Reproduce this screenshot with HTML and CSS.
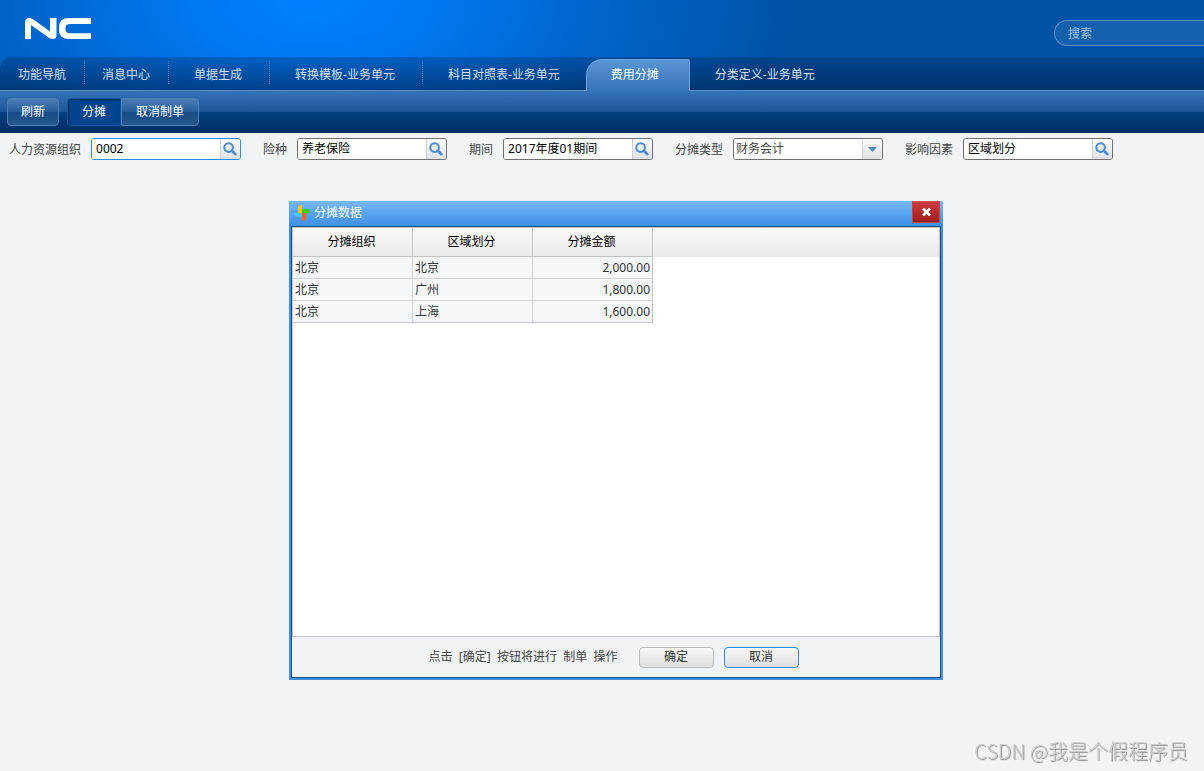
FILE: index.html
```html
<!DOCTYPE html>
<html lang="zh-CN">
<head>
<meta charset="utf-8">
<title>费用分摊</title>
<link rel="stylesheet" href="styles.css">
</head>
<body>
<svg class="defs" aria-hidden="true">
  <symbol id="lens" viewBox="0 0 14 14"><circle cx="5.6" cy="5.6" r="4.3" fill="none" stroke="#4a8ace" stroke-width="2"/><path d="M8.8 8.8 12.4 12.2" stroke="#4a8ace" stroke-width="2.6" stroke-linecap="round"/></symbol>
</svg>
<header class="header">
  <div class="brand">
    <svg class="logo" viewBox="0 0 66 22" role="img" aria-label="NC">
      <path d="M0 21V4.500Q0 0 4 0Q6.500 0 8.500 1.500L25 13.500V0H31.500V17Q31.500 21 28 21Q25.500 21 23.500 19.500L6 7V21Z" fill="#fff"/>
      <path d="M66 0H44Q34 0 34 9V12Q34 21 44 21H66V15.200H45Q40.500 15.200 40.500 11.500V9.500Q40.500 6 45 6H66Z" fill="#fff"/>
    </svg>
    <input class="search" type="search" placeholder="搜索" aria-label="搜索">
  </div>
  <nav class="tabs">
    <a class="tab tab-fixed" href="#">功能导航</a>
    <a class="tab tab-fixed" href="#">消息中心</a>
    <a class="tab" href="#">单据生成</a>
    <a class="tab" href="#">转换模板-业务单元</a>
    <a class="tab tab-last" href="#">科目对照表-业务单元</a>
    <a class="tab tab-active" href="#" aria-current="page">费用分摊</a>
    <a class="tab tab-last" href="#">分类定义-业务单元</a>
  </nav>
</header>
<div class="toolbar">
  <button class="tool" type="button">刷新</button>
  <div class="tool-group">
    <button class="tool tool-pressed" type="button">分摊</button>
    <button class="tool tool-end" type="button">取消制单</button>
  </div>
</div>
<main>
  <form class="filters">
    <div class="field"><label for="org">人力资源组织</label>
      <div class="control control-focus"><input id="org" value="0002"><button class="pick" type="button" aria-label="选择"><svg class="lens"><use href="#lens"/></svg></button></div></div>
    <div class="field"><label for="kind">险种</label>
      <div class="control"><input id="kind" value="养老保险"><button class="pick" type="button" aria-label="选择"><svg class="lens"><use href="#lens"/></svg></button></div></div>
    <div class="field"><label for="period">期间</label>
      <div class="control"><input id="period" value="2017年度01期间"><button class="pick" type="button" aria-label="选择"><svg class="lens"><use href="#lens"/></svg></button></div></div>
    <div class="field"><label for="type">分摊类型</label>
      <div class="control"><select id="type"><option>财务会计</option></select><span class="pick"><svg class="arrow" viewBox="0 0 9 5"><path d="M0 0H9L4.500 5Z" fill="#4a8ace"/></svg></span></div></div>
    <div class="field"><label for="factor">影响因素</label>
      <div class="control"><input id="factor" value="区域划分"><button class="pick" type="button" aria-label="选择"><svg class="lens"><use href="#lens"/></svg></button></div></div>
  </form>
</main>
<section class="dialog" role="dialog" aria-labelledby="dialog-title">
  <div class="titlebar">
    <svg class="mark" viewBox="0 0 16 16" aria-hidden="true">
      <path d="M4 8V4Q4 0 8 0V8Z" fill="#ffc800"/><path d="M8 4H13Q16 4 16 8H8Z" fill="#3ccc10"/><path d="M8 8H12V12Q12 16 8 16Z" fill="#ff6400"/><path d="M0 8H8V12H4Q0 12 0 8Z" fill="#48c4ff"/>
    </svg>
    <h1 class="title" id="dialog-title">分摊数据</h1>
    <button class="close" type="button" aria-label="关闭"><svg class="cross" viewBox="0 0 9 8"><path d="M1 0.500 8 7.500M8 0.500 1 7.500" stroke="#fff" stroke-width="2.600"/></svg></button>
  </div>
  <div class="panel">
    <div class="grid">
      <table class="data">
        <thead><tr><th>分摊组织</th><th>区域划分</th><th>分摊金额</th></tr></thead>
        <tbody>
          <tr><td>北京</td><td>北京</td><td class="num">2,000.00</td></tr>
          <tr><td>北京</td><td>广州</td><td class="num">1,800.00</td></tr>
          <tr><td>北京</td><td>上海</td><td class="num">1,600.00</td></tr>
        </tbody>
      </table>
    </div>
    <div class="actions">
      <p class="hint">点击  [确定]  按钮将进行  制单  操作</p>
      <button class="btn" type="button">确定</button>
      <button class="btn btn-focus" type="button">取消</button>
    </div>
  </div>
</section>
<div class="credit">CSDN @我是个假程序员</div>
</body>
</html>
```
FILE: styles.css
```css
* { box-sizing: border-box; }
body, input, button, select {
  font: 12px/20px "Noto Sans", "Noto Sans CJK SC", sans-serif;
}
body { margin: 0; min-height: 100vh; background: #f1f3f7; color: #444; }
button { padding: 0; }
.defs { position: absolute; width: 0; height: 0; }

.header { background: radial-gradient(ellipse 480px 260px at 310px 0, #0080ff 0%, #0078f0 25%, #0062c6 65%, #0052a5 100%); }
.brand { display: flex; justify-content: space-between; align-items: flex-start; height: 57px; padding: 18px 0 0 25px; }
.logo { width: 66px; height: 22px; }
.search {
  appearance: none; width: 150px; height: 26px; margin: 2px 0 0; padding: 0 13px;
  border: 1px solid #5a8fc6; border-right: 0; border-radius: 13px 0 0 13px;
  background: #1560ad; color: #fff; outline: none;
}
.search::placeholder { color: #a3c0de; opacity: 1; }

.tabs {
  display: flex; height: 34px; border-bottom: 1px solid #5a8fc6; border-top-left-radius: 12px;
  background: linear-gradient(rgba(0, 26, 64, .25), rgba(0, 26, 64, .55));
}
.tab {
  position: relative; padding: 0 27px 0 26px; line-height: 35px; color: #cfe0f2;
  text-decoration: none; white-space: nowrap;
}
.tab::after { content: ""; position: absolute; right: -1px; top: 4px; bottom: 6px; border-right: 1px dotted #3f78b5; }
.tab-fixed { padding: 0 18px; }
.tab-last { padding-right: 26px; }
.tab-last::after, .tab-active::after { display: none; }
.tab-active {
  height: 32px; margin-top: 2px; padding: 0 30px 0 24px; border: 1px solid #6ea3dc; border-bottom: 0;
  border-radius: 16px 3px 0 0; background: linear-gradient(#5a95d4, #3674b8); color: #fff; line-height: 30px;
}
.tab-active + .tab { padding-left: 25px; }

.toolbar {
  display: flex; gap: 8px; height: 42px; padding: 7px;
  background: linear-gradient(#3674b8 0, #1b5596 50%, #003f80 50%, #002f63 100%);
}
.tool-group { display: flex; }
.tool {
  height: 28px; padding: 0 13px; border: 1px solid #4c7fb4; border-radius: 4px; color: #fff;
  background: linear-gradient(#4a7fb8, #265c98 50%, #164a84 50%, #26588d);
}
.tool-pressed {
  padding: 0 14px; border-color: #0a55a8; border-radius: 4px 0 0 4px;
  background: #00458e; box-shadow: inset 1px 1px 2px #002a5c;
}
.tool-end { padding: 0 14px; border-radius: 0 4px 4px 0; }

.filters { display: flex; flex-wrap: wrap; gap: 6px 22px; padding: 5px 9px; }
.field { display: flex; align-items: center; gap: 10px; }
.field label { padding-top: 2px; }
.control {
  display: flex; width: 150px; height: 22px; border: 1px solid #707070; border-radius: 3px;
  background: #fff; overflow: hidden;
}
.control input, .control select {
  appearance: none; flex: 1; min-width: 0; height: 20px; margin: 0; padding: 0 0 0 4px; border: 0;
  background: #fff; color: #000; outline: none;
}
.control select { padding: 0 0 0 2px; color: #444; }
.control-focus { border-color: #2b8cf5; }
.control-focus input { padding: 0; border-left: 4px solid #fff6d8; }
.pick {
  display: flex; align-items: center; justify-content: center; width: 20px; border: 0;
  border-left: 1px solid #d0d0d0; background: linear-gradient(#fcfcfd, #dfe1e6);
}
.lens { width: 14px; height: 14px; margin-right: 1px; }
.arrow { width: 9px; height: 5px; }

.dialog { position: absolute; left: 289px; top: 201px; width: 654px; padding-bottom: 2px; background: #3d8fe6; }
.titlebar { display: flex; height: 25px; padding: 0 3px 0 5px; background: linear-gradient(#78b7f8, #3d8fe6); }
.mark { width: 16px; height: 16px; margin-top: 4px; }
.title { flex: 1; margin: 0; padding: 2px 4px; font-size: 12px; font-weight: 400; line-height: 20px; color: #fff; }
.close {
  display: flex; justify-content: center; align-items: center; width: 28px; height: 22px; padding-bottom: 1px;
  border: 1px solid #b84450; border-top-color: #d05050; border-radius: 0 0 2px 2px;
  background: linear-gradient(#cc3c40, #a01c20);
}
.cross { width: 9px; height: 8px; }
.panel { margin: 0 2px; border: 1px solid #1d4f8c; background: #f1f3f7; }
.grid {
  min-height: 410px; border: 1px solid #c3c3c3;
  background: linear-gradient(#fafafa, #e9e9e9) top / 100% 29px no-repeat #fff;
}
.data { border-collapse: separate; border-spacing: 0; table-layout: fixed; width: 360px; }
.data th {
  height: 29px; padding: 0 2px 0 0; border-right: 1px solid #c3c3c3; border-bottom: 1px solid #c3c3c3;
  font-weight: 400; color: #000;
}
.data td {
  height: 22px; padding: 0 2px; border-right: 1px solid #d3d3d3; border-bottom: 1px solid #d3d3d3;
  background: #f5f7fb; color: #333; line-height: 20px;
}
.data td:last-child { border-right-color: #c3c3c3; }
.data tr:last-child td { border-bottom-color: #c3c3c3; }
.data .num { text-align: right; }
.actions { display: flex; align-items: center; justify-content: center; gap: 10px; height: 40px; padding-right: 4px; }
.hint { margin: 0 12px 0 0; white-space: pre; }
.btn {
  width: 75px; height: 21px; padding-right: 2px; border: 1px solid #bcbcbc; border-radius: 4px;
  background: linear-gradient(#f8f8f8, #dedede); color: #333; line-height: 18px;
}
.btn-focus { border-color: #2b8cf5; }

.credit {
  position: fixed; right: 16px; bottom: 6px; font: 300 20px/28px "Noto Sans CJK SC", sans-serif;
  color: #c8cace; text-shadow: 1px 1px 1px #8a8a8a;
}
```
